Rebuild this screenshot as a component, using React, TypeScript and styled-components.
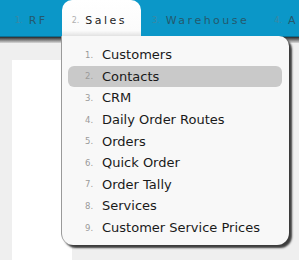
import React from "react";
import styled, { createGlobalStyle } from "styled-components";

const GlobalStyle = createGlobalStyle`
    html, body {
        margin: 0;
        padding: 0;
        background: #efefef;
        font-family: "DejaVu Sans", Verdana, sans-serif;
        overflow: hidden;
    }
`;

const Page = styled.div`
    width: 299px;
    height: 260px;
    position: relative;
    overflow: hidden;
`;

const TopBar = styled.div`
    height: 36px;
    background: #0b97c8;
    border-bottom: 1px solid #0a6f93;
    display: flex;
    align-items: stretch;
    padding-left: 4px;
    white-space: nowrap;
`;

const NavItem = styled.div<{ $active?: boolean }>`
    position: relative;
    display: flex;
    align-items: center;
    gap: 6px;
    padding: 5px 14px 0 ${p => (p.$active ? 10 : 11)}px;
    border-radius: ${p => (p.$active ? "10px 10px 0 0" : "0")};
    background: ${p => (p.$active ? "linear-gradient(#ffffff 0%, #fbfbfb 85%, #e2e2e2 100%)" : "transparent")};
    z-index: 3;
`;

const NavNum = styled.span<{ $active?: boolean }>`
    font-size: 8px;
    color: ${p => (p.$active ? "#b0b0b0" : "#3d87a3")};
`;

const NavLabel = styled.span<{ $active?: boolean }>`
    font-size: 11px;
    letter-spacing: 2.5px;
    color: ${p => (p.$active ? "#1c1c1c" : "#24596d")};
`;

const ShadowStrip = styled.div`
    height: 6px;
    background: linear-gradient(#2a2a2a, #777 45%, #d8d8d8 100%);
`;

const Content = styled.div`
    padding: 17px 0 0 12px;
`;

const Panel = styled.div`
    width: 60px;
    height: 220px;
    background: #ffffff;
`;

const Dropdown = styled.ul`
    position: absolute;
    left: 61px;
    top: 36px;
    width: 228px;
    margin: 0;
    padding: 8px 7px 7px 6px;
    box-sizing: border-box;
    list-style: none;
    background: #f8f8f8;
    border-left: 1px solid #9a9a9a;
    border-radius: 0 10px 12px 12px;
    box-shadow: 3px 3px 2px rgba(0, 0, 0, 0.75);
    z-index: 2;
`;

const MenuItem = styled.li<{ $hover?: boolean }>`
    height: 21.6px;
    display: flex;
    align-items: center;
    gap: 8px;
    padding-left: 17px;
    border-radius: 6px;
    background: ${p => (p.$hover ? "#c9c9c9" : "transparent")};
`;

const ItemNum = styled.span`
    width: 9px;
    font-size: 8.5px;
    color: #9a9a9a;
`;

const ItemLabel = styled.span`
    font-size: 13px;
    color: #1a1a1a;
`;

const navs = ["RF", "Sales", "Warehouse", "A"];
const items = [
    "Customers",
    "Contacts",
    "CRM",
    "Daily Order Routes",
    "Orders",
    "Quick Order",
    "Order Tally",
    "Services",
    "Customer Service Prices",
];

export default function App() {
    return (
        <Page>
            <GlobalStyle />
            <TopBar>
                {navs.map((n, i) => (
                    <NavItem key={n} $active={i === 1}>
                        <NavNum $active={i === 1}>{i + 1}.</NavNum>
                        <NavLabel $active={i === 1}>{n}</NavLabel>
                    </NavItem>
                ))}
            </TopBar>
            <ShadowStrip />
            <Content>
                <Panel />
            </Content>
            <Dropdown>
                {items.map((it, i) => (
                    <MenuItem key={it} $hover={i === 1}>
                        <ItemNum>{i + 1}.</ItemNum>
                        <ItemLabel>{it}</ItemLabel>
                    </MenuItem>
                ))}
            </Dropdown>
        </Page>
    );
}
